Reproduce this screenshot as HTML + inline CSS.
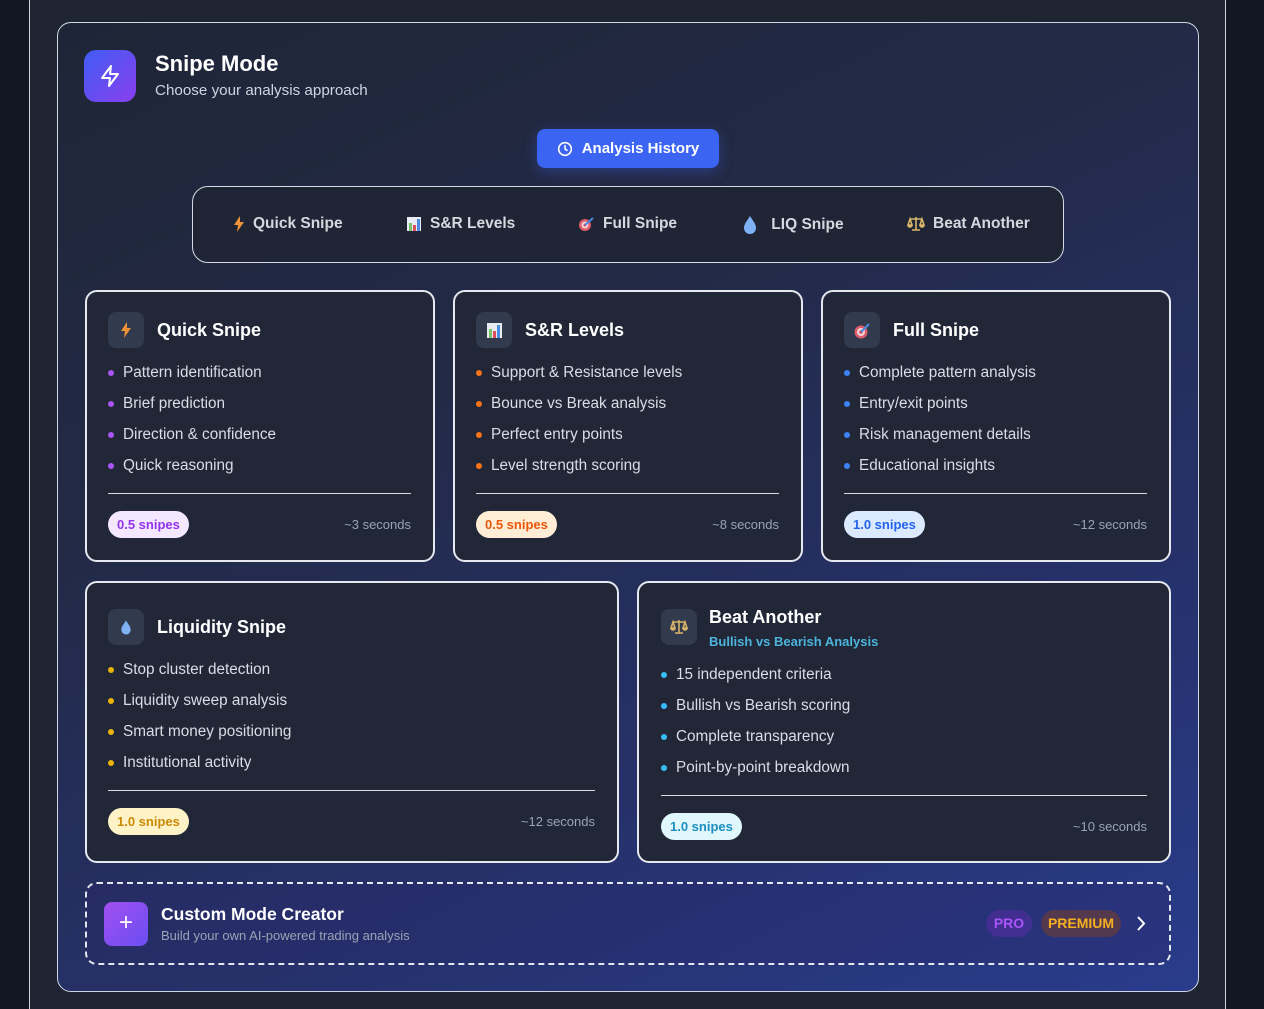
<!DOCTYPE html>
<html><head><meta charset="utf-8"><style>
*{box-sizing:border-box;margin:0;padding:0}
body{width:1264px;height:1009px;overflow:hidden;background:#131722;font-family:"Liberation Sans",sans-serif;position:relative}
.abs{position:absolute}
#page{left:29px;top:0;width:1197px;height:1009px;background:#1f2433;border-left:1px solid #cfd4dc;border-right:1px solid #cfd4dc}
#main{left:57px;top:22px;width:1142px;height:970px;border:1px solid #cfd6e4;border-radius:14px;background:linear-gradient(155deg,#1f2537 0%,#222a46 35%,#26316a 70%,#293c8c 100%)}
.card{position:absolute;background:#212737;border:2px solid #e5e8ef;border-radius:12px}
.ic{position:absolute;width:36px;height:36px;border-radius:8px;background:#323a4d;display:flex;align-items:center;justify-content:center}
.ttl{position:absolute;font-size:18px;font-weight:bold;color:#fff;line-height:22px;white-space:nowrap}
.ul{position:absolute;left:21px}
.li{height:31px;line-height:20px;font-size:15.3px;color:#d9dde5;padding-left:15px;position:relative;white-space:nowrap}
.li:before{content:"";position:absolute;left:0;top:7px;width:6px;height:6px;border-radius:50%;background:var(--d)}
.div{position:absolute;left:21px;height:1px;background:#d8dce4}
.bdg{position:absolute;left:21px;height:27px;line-height:27px;padding:0 9px;border-radius:14px;font-size:13px;font-weight:bold}
.sec{position:absolute;right:22px;font-size:13px;color:#9aa3b2;line-height:18px}
.tab{position:absolute;top:215px;font-size:15.5px;font-weight:bold;color:#d4d8df;display:flex;align-items:center;gap:8px;white-space:nowrap;line-height:18px}
</style></head><body>
<div id="page" class="abs"></div>
<div id="main" class="abs"></div>

<div class="abs" style="left:84px;top:50px;width:52px;height:52px;border-radius:12px;background:linear-gradient(135deg,#3f5df2,#8a3ff0);display:flex;align-items:center;justify-content:center">
<svg width="24" height="24" viewBox="0 0 24 24" fill="none" stroke="#fff" stroke-width="2" stroke-linejoin="round"><path d="M13 2L4 14h8l-1 8 9-12h-8l1-8z"/></svg></div>
<div class="abs" style="left:155px;top:52px;font-size:22px;font-weight:bold;color:#fff;line-height:24px">Snipe Mode</div>
<div class="abs" style="left:155px;top:82px;font-size:15.2px;color:#cfd5df;line-height:18px">Choose your analysis approach</div>

<div class="abs" style="left:537px;top:129px;width:182px;height:39px;border-radius:8px;background:#3b64f2;box-shadow:0 4px 14px rgba(59,100,242,.35);display:flex;align-items:center;justify-content:center;gap:9px;color:#fff;font-size:15px;font-weight:bold">
<svg width="16" height="16" viewBox="0 0 24 24" fill="none" stroke="#fff" stroke-width="2.4"><circle cx="12" cy="12" r="9.5"/><path d="M12 7v5l3 2" stroke-linecap="round"/></svg>Analysis History</div>

<div class="abs" style="left:192px;top:186px;width:872px;height:77px;border:1.5px solid #d5dae3;border-radius:16px;background:#1f2535"></div>
<div class="tab" style="left:233px"><svg width="12" height="16" viewBox="0 0 12 16"><path d="M7 0L1 9h4l-1 7 7-10H7z" fill="#f0923a"/></svg>Quick Snipe</div>
<div class="tab" style="left:406px"><svg width="16" height="16"><rect x="1" y="1" width="14" height="14" fill="#e8ecf2"/><rect x="3" y="7" width="3" height="8" fill="#7cc36b"/><rect x="7" y="9" width="3" height="6" fill="#e0505a"/><rect x="11" y="3" width="3" height="12" fill="#4a8ce0"/></svg>S&amp;R Levels</div>
<div class="tab" style="left:578px"><svg width="17" height="16"><circle cx="7" cy="9" r="6" fill="#e05c6c"/><circle cx="7" cy="9" r="3.5" fill="#f3d4d8"/><circle cx="7" cy="9" r="1.5" fill="#d6455a"/><path d="M7 9L15 2" stroke="#4a8ce0" stroke-width="2"/></svg>Full Snipe</div>
<div class="tab" style="left:741px"><svg width="18" height="20" viewBox="0 0 18 20"><path d="M9 1C6 6 3 9 3 13a6 6 0 0012 0c0-4-3-7-6-12z" fill="#7fb2f5"/></svg>&nbsp;LIQ Snipe</div>
<div class="tab" style="left:907px"><svg width="18" height="16" viewBox="0 0 18 16" fill="none" stroke="#d9b46a" stroke-width="1.6"><path d="M9 1v13M3 3h12M5 14h8M3 3l-2 6h4zM15 3l-2 6h4z"/><path d="M1 9a2 2 0 004 0M13 9a2 2 0 004 0" fill="#d9b46a"/></svg>Beat Another</div>

<!-- Row 1 -->
<div class="card" style="left:85px;top:290px;width:350px;height:272px;--d:#a855f7">
<div class="ic" style="left:21px;top:20px"><svg width="12" height="18" viewBox="0 0 12 16"><path d="M7 0L1 9h4l-1 7 7-10H7z" fill="#f0923a"/></svg></div>
<div class="ttl" style="left:70px;top:27px">Quick Snipe</div>
<div class="ul" style="top:71px"><div class="li">Pattern identification</div><div class="li">Brief prediction</div><div class="li">Direction &amp; confidence</div><div class="li">Quick reasoning</div></div>
<div class="div" style="top:201px;width:303px"></div>
<div class="bdg" style="top:219px;background:#f3e8ff;color:#9333ea">0.5 snipes</div>
<div class="sec" style="top:224px">~3 seconds</div></div>

<div class="card" style="left:453px;top:290px;width:350px;height:272px;--d:#f97316">
<div class="ic" style="left:21px;top:20px"><svg width="17" height="17"><rect x="1" y="1" width="15" height="15" fill="#e8ecf2"/><rect x="3" y="7" width="3" height="9" fill="#7cc36b"/><rect x="7" y="9" width="3" height="7" fill="#e0505a"/><rect x="11" y="3" width="3" height="13" fill="#4a8ce0"/></svg></div>
<div class="ttl" style="left:70px;top:27px">S&amp;R Levels</div>
<div class="ul" style="top:71px"><div class="li">Support &amp; Resistance levels</div><div class="li">Bounce vs Break analysis</div><div class="li">Perfect entry points</div><div class="li">Level strength scoring</div></div>
<div class="div" style="top:201px;width:303px"></div>
<div class="bdg" style="top:219px;background:#ffedd5;color:#ea580c">0.5 snipes</div>
<div class="sec" style="top:224px">~8 seconds</div></div>

<div class="card" style="left:821px;top:290px;width:350px;height:272px;--d:#3b82f6">
<div class="ic" style="left:21px;top:20px"><svg width="18" height="17"><circle cx="8" cy="10" r="6.5" fill="#e05c6c"/><circle cx="8" cy="10" r="4" fill="#f3d4d8"/><circle cx="8" cy="10" r="1.8" fill="#d6455a"/><path d="M8 10L16 2" stroke="#4a8ce0" stroke-width="2"/></svg></div>
<div class="ttl" style="left:70px;top:27px">Full Snipe</div>
<div class="ul" style="top:71px"><div class="li">Complete pattern analysis</div><div class="li">Entry/exit points</div><div class="li">Risk management details</div><div class="li">Educational insights</div></div>
<div class="div" style="top:201px;width:303px"></div>
<div class="bdg" style="top:219px;background:#dbeafe;color:#2563eb">1.0 snipes</div>
<div class="sec" style="top:224px">~12 seconds</div></div>

<!-- Row 2 -->
<div class="card" style="left:85px;top:581px;width:534px;height:282px;--d:#eab308">
<div class="ic" style="left:21px;top:26px"><svg width="14" height="17" viewBox="0 0 18 20"><path d="M9 1C6 6 3 9 3 13a6 6 0 0012 0c0-4-3-7-6-12z" fill="#7fb2f5"/></svg></div>
<div class="ttl" style="left:70px;top:33px">Liquidity Snipe</div>
<div class="ul" style="top:77px"><div class="li">Stop cluster detection</div><div class="li">Liquidity sweep analysis</div><div class="li">Smart money positioning</div><div class="li">Institutional activity</div></div>
<div class="div" style="top:207px;width:487px"></div>
<div class="bdg" style="top:225px;background:#fef3c7;color:#ca8a04">1.0 snipes</div>
<div class="sec" style="top:230px">~12 seconds</div></div>

<div class="card" style="left:637px;top:581px;width:534px;height:282px;--d:#38bdf8">
<div class="ic" style="left:22px;top:26px"><svg width="18" height="16" viewBox="0 0 18 16" fill="none" stroke="#d9b46a" stroke-width="1.6"><path d="M9 1v13M3 3h12M5 14h8M3 3l-2 6h4zM15 3l-2 6h4z"/><path d="M1 9a2 2 0 004 0M13 9a2 2 0 004 0" fill="#d9b46a"/></svg></div>
<div class="ttl" style="left:70px;top:23px">Beat Another</div>
<div class="abs" style="left:70px;top:50px;font-size:13px;font-weight:bold;color:#4cb4dc;line-height:18px">Bullish vs Bearish Analysis</div>
<div class="ul" style="top:82px;left:22px"><div class="li">15 independent criteria</div><div class="li">Bullish vs Bearish scoring</div><div class="li">Complete transparency</div><div class="li">Point-by-point breakdown</div></div>
<div class="div" style="top:212px;left:22px;width:486px"></div>
<div class="bdg" style="top:230px;left:22px;background:#e0f7fc;color:#1d8fc0">1.0 snipes</div>
<div class="sec" style="top:235px">~10 seconds</div></div>

<!-- Custom -->
<div class="abs" style="left:85px;top:882px;width:1086px;height:83px;border:2px dashed #e2e6ee;border-radius:12px;background:rgba(40,40,110,.35)"></div>
<div class="abs" style="left:104px;top:902px;width:44px;height:44px;border-radius:8px;background:linear-gradient(135deg,#a24ff0,#6a4ef2);color:#fff;font-size:24px;line-height:42px;text-align:center">+</div>
<div class="abs" style="left:161px;top:904px;font-size:17.5px;font-weight:bold;color:#fff;line-height:20px">Custom Mode Creator</div>
<div class="abs" style="left:161px;top:928px;font-size:13px;color:#9ba3b5;line-height:16px">Build your own AI-powered trading analysis</div>
<div class="abs" style="left:986px;top:910px;width:46px;height:27px;border-radius:14px;background:rgba(126,40,200,.3);color:#a855f7;font-size:14px;font-weight:bold;line-height:27px;text-align:center">PRO</div>
<div class="abs" style="left:1041px;top:910px;width:80px;height:27px;border-radius:14px;background:rgba(120,60,40,.55);color:#f5b021;font-size:14px;font-weight:bold;line-height:27px;text-align:center">PREMIUM</div>
<svg class="abs" style="left:1134px;top:915px" width="14" height="17" viewBox="0 0 14 17" fill="none" stroke="#fff" stroke-width="2"><path d="M4 2l6 6.5L4 15"/></svg>
</body></html>
